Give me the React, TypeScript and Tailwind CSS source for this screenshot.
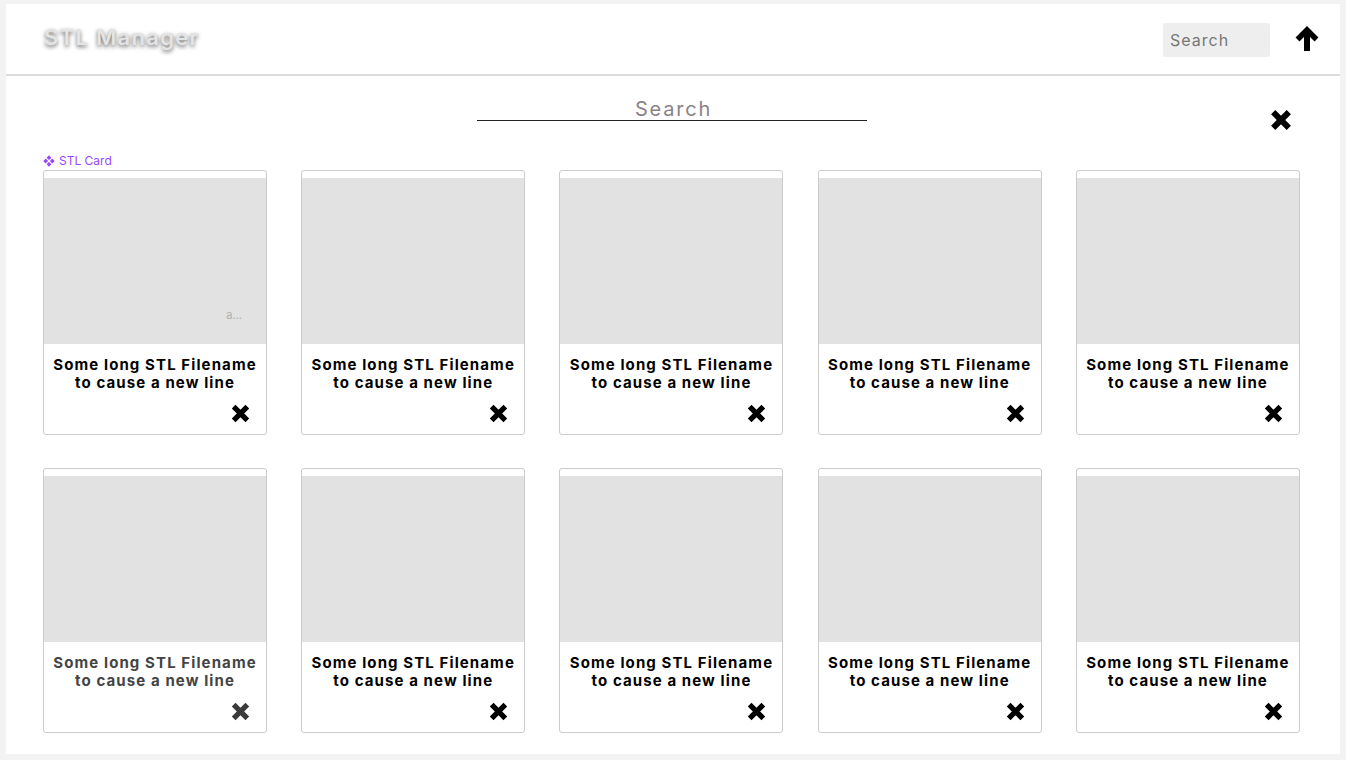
const XIcon = ({ className = '' }: { className?: string }) => (
  <svg viewBox="0 0 20 20" className={className} fill="none">
    <path d="M3.5 3.5 L16.5 16.5 M16.5 3.5 L3.5 16.5" stroke="currentColor" strokeWidth="5" />
  </svg>
);

const ArrowUp = () => (
  <svg viewBox="0 0 26 26" className="w-[26px] h-[26px] text-black" fill="none">
    <path d="M13 6 L13 25" stroke="currentColor" strokeWidth="6" />
    <path d="M3.5 13.5 L13 4 L22.5 13.5" stroke="currentColor" strokeWidth="5.5" strokeLinejoin="miter" />
  </svg>
);

const StlCard = ({ dim = false, tag = false }: { dim?: boolean; tag?: boolean }) => (
  <div className="w-[224px] h-[265px] border border-[#cbcbcb] rounded-[3px] bg-white flex flex-col overflow-hidden">
    <div className="h-[7px] shrink-0" />
    <div className="h-[166px] shrink-0 bg-[#e2e2e2] relative">
      {tag && <span className="absolute right-[24px] bottom-[21px] text-[11px] text-[#b0b0b0]">a...</span>}
    </div>
    <div className={`pt-[12px] text-center text-[15px] leading-[18px] font-bold tracking-[1.1px] ${dim ? 'text-[#444]' : 'text-black'}`}>
      Some long STL Filename<br />to cause a new line
    </div>
    <div className="flex justify-end pr-[15px] pt-[11px]">
      <XIcon className={`w-[21px] h-[21px] ${dim ? 'text-[#3a3a3a]' : 'text-black'}`} />
    </div>
  </div>
);

export default function App() {
  return (
    <div className="w-[1346px] h-[760px] bg-[#f3f3f3] pt-[4px] px-[6px] font-['Inter',sans-serif]">
      <div className="bg-white h-[750px]">
        <header className="h-[72px] flex items-center pl-[38px] pr-[20px] border-b-2 border-[#dcdcdc]">
          <h1 className="text-[22px] font-semibold tracking-[1.3px] text-[#e4e4e4] [text-shadow:0_2px_4px_rgba(0,0,0,0.6)] mt-[-4px]">
            STL Manager
          </h1>
          <div className="ml-auto flex items-center gap-[24px]">
            <div className="w-[107px] h-[34px] bg-[#eeeeee] rounded-[3px] flex items-center pl-[7px] text-[16px] tracking-[1px] text-[#777] mt-[1px]">
              Search
            </div>
            <ArrowUp />
          </div>
        </header>

        <div className="relative h-[76px] flex justify-center pt-[16px]">
          <div className="w-[390px] border-b border-[#222] h-[29px] text-center text-[20px] tracking-[1.8px] text-[#8a8288] leading-[34px] ml-[-3px] pl-[4px]">
            Search
          </div>
          <XIcon className="absolute right-[47px] top-[32px] w-[24px] h-[24px] text-black" />
        </div>

        <div className="pl-[37px] pr-[40px]">
          <div className="flex items-center gap-[4px] text-[12px] text-[#9747ff] h-[16px] leading-[16px] mt-[1px]">
            <svg viewBox="0 0 12 12" className="w-[12px] h-[12px]" fill="currentColor">
              <path d="M6 0.3 L8.4 2.7 L6 5.1 L3.6 2.7Z M6 6.9 L8.4 9.3 L6 11.7 L3.6 9.3Z M2.7 3.6 L5.1 6 L2.7 8.4 L0.3 6Z M9.3 3.6 L11.7 6 L9.3 8.4 L6.9 6Z" />
            </svg>
            STL Card
          </div>
          <div className="grid grid-cols-5 gap-x-[34.2px] gap-y-[33px] mt-[1px]">
            <StlCard tag />
            <StlCard />
            <StlCard />
            <StlCard />
            <StlCard />
            <StlCard dim />
            <StlCard />
            <StlCard />
            <StlCard />
            <StlCard />
          </div>
        </div>
      </div>
    </div>
  );
}
